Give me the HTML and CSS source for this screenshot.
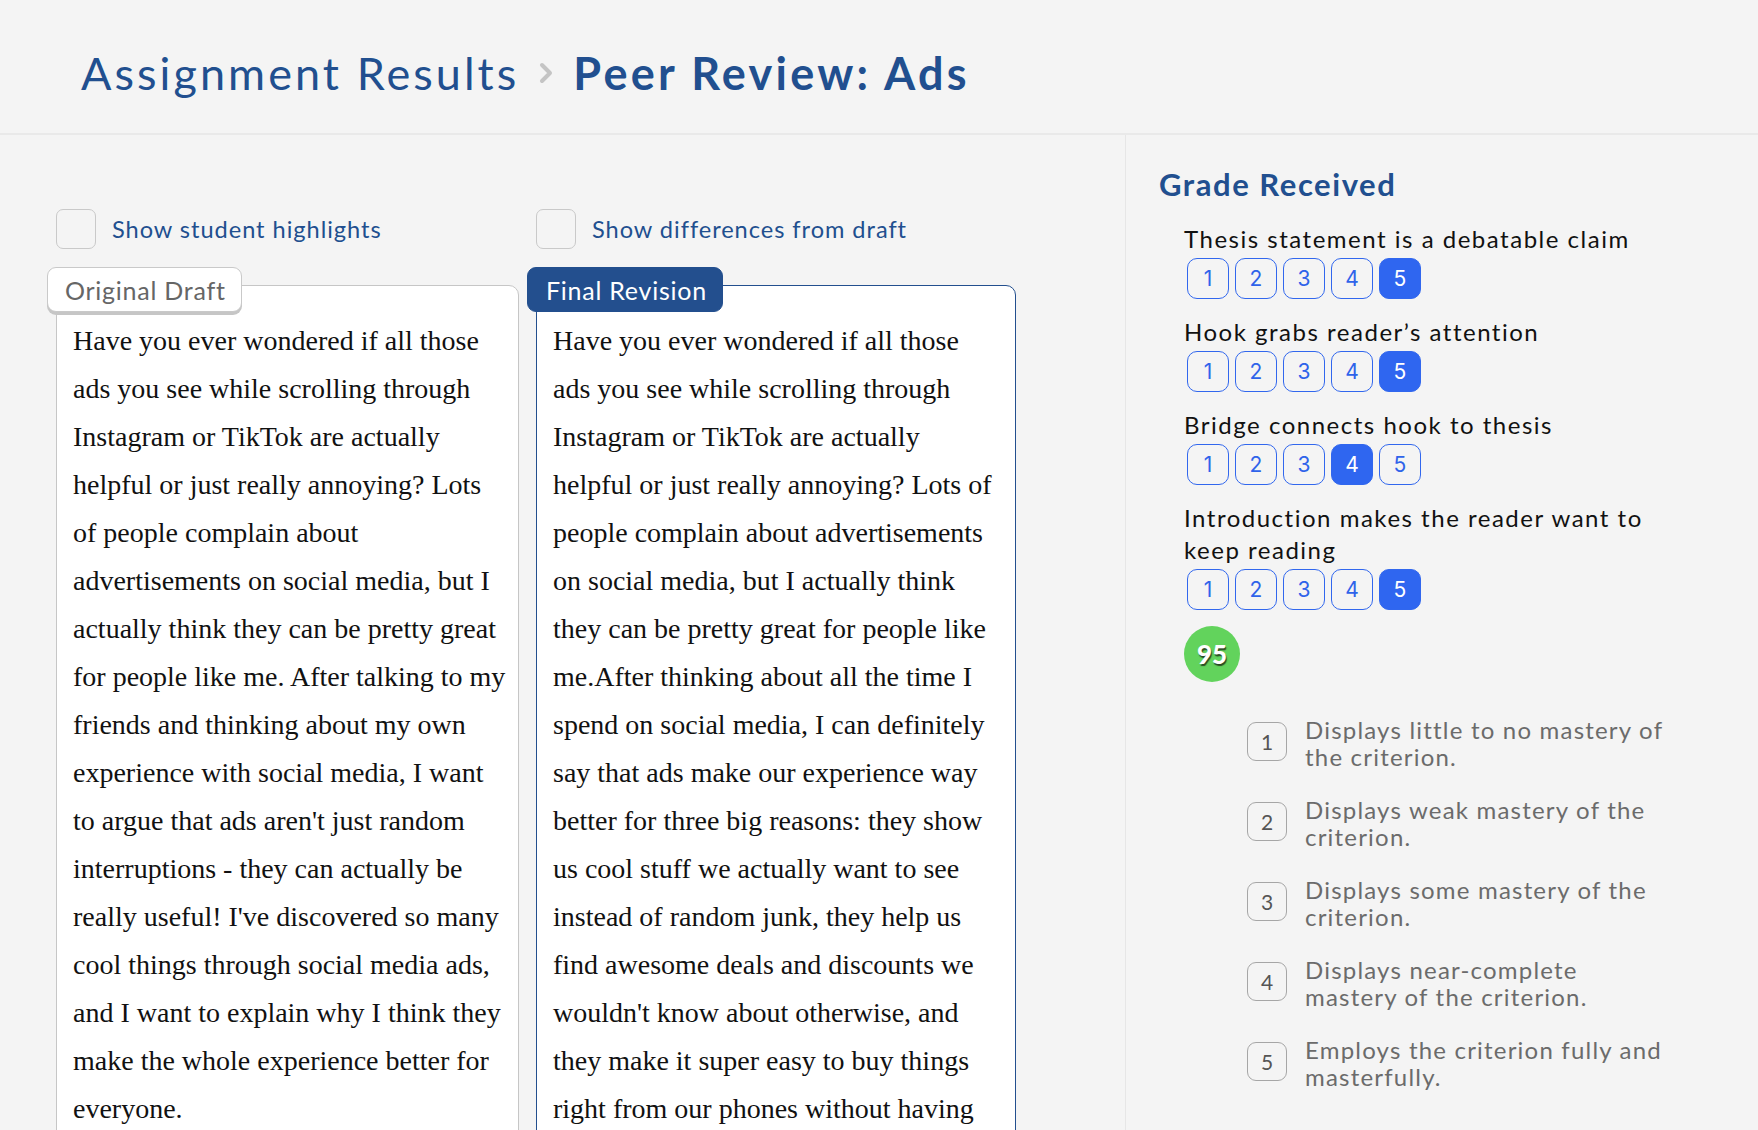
FILE: index.html
```html
<!DOCTYPE html>
<html lang="en">
<head>
  <meta charset="UTF-8" />
  <meta name="viewport" content="width=device-width, initial-scale=1.0" />
  <title>Peer Review: Ads</title>
  <link rel="stylesheet" href="styles.css">
</head>
<body>
  <!-- Breadcrumb header -->
  <div class="header">
    <h1 class="crumbs">
      <a href="#" class="crumb">Assignment Results</a>
      <svg class="chevron" width="14" height="22" viewBox="0 0 14 22"><polyline points="3,3 11,11 3,19" fill="none" stroke="#c4c4c4" stroke-width="4" stroke-linecap="round" stroke-linejoin="round"/></svg>
      <span class="crumb-current">Peer Review: Ads</span>
    </h1>
  </div>

  <div class="main">
    <div class="essays">
      <!-- Original draft -->
      <div class="essay-col draft-col">
        <label class="toggle">
          <span class="checkbox"></span>
          <span>Show student highlights</span>
        </label>
        <div class="tab tab-draft">Original Draft</div>
        <div class="paper">
          Have you ever wondered if all those<br>
          ads you see while scrolling through<br>
          Instagram or TikTok are actually<br>
          helpful or just really annoying? Lots<br>
          of people complain about<br>
          advertisements on social media, but I<br>
          actually think they can be pretty great<br>
          for people like me. After talking to my<br>
          friends and thinking about my own<br>
          experience with social media, I want<br>
          to argue that ads aren't just random<br>
          interruptions - they can actually be<br>
          really useful! I've discovered so many<br>
          cool things through social media ads,<br>
          and I want to explain why I think they<br>
          make the whole experience better for<br>
          everyone.
        </div>
      </div>

      <!-- Final revision -->
      <div class="essay-col final-col">
        <label class="toggle">
          <span class="checkbox"></span>
          <span>Show differences from draft</span>
        </label>
        <div class="tab tab-final">Final Revision</div>
        <div class="paper paper-final">
          Have you ever wondered if all those<br>
          ads you see while scrolling through<br>
          Instagram or TikTok are actually<br>
          helpful or just really annoying? Lots of<br>
          people complain about advertisements<br>
          on social media, but I actually think<br>
          they can be pretty great for people like<br>
          me.After thinking about all the time I<br>
          spend on social media, I can definitely<br>
          say that ads make our experience way<br>
          better for three big reasons: they show<br>
          us cool stuff we actually want to see<br>
          instead of random junk, they help us<br>
          find awesome deals and discounts we<br>
          wouldn't know about otherwise, and<br>
          they make it super easy to buy things<br>
          right from our phones without having<br>
          to leave the app.
        </div>
      </div>
    </div>

    <!-- Grade sidebar -->
    <div class="sidebar">
      <h2 class="grade-title">Grade Received</h2>

      <div class="criteria">
        <div class="criterion">
          <div class="criterion-name">Thesis statement is a debatable claim</div>
          <div class="scores">
            <span class="score">1</span><span class="score">2</span><span class="score">3</span><span class="score">4</span><span class="score selected">5</span>
          </div>
        </div>
        <div class="criterion">
          <div class="criterion-name">Hook grabs reader’s attention</div>
          <div class="scores">
            <span class="score">1</span><span class="score">2</span><span class="score">3</span><span class="score">4</span><span class="score selected">5</span>
          </div>
        </div>
        <div class="criterion">
          <div class="criterion-name">Bridge connects hook to thesis</div>
          <div class="scores">
            <span class="score">1</span><span class="score">2</span><span class="score">3</span><span class="score selected">4</span><span class="score">5</span>
          </div>
        </div>
        <div class="criterion">
          <div class="criterion-name">Introduction makes the reader want to keep reading</div>
          <div class="scores">
            <span class="score">1</span><span class="score">2</span><span class="score">3</span><span class="score">4</span><span class="score selected">5</span>
          </div>
        </div>

        <div class="total">95</div>
      </div>

      <!-- Scale legend -->
      <ul class="legend">
        <li><span class="legend-num">1</span><span class="legend-text">Displays little to no mastery of the criterion.</span></li>
        <li><span class="legend-num">2</span><span class="legend-text">Displays weak mastery of the criterion.</span></li>
        <li><span class="legend-num">3</span><span class="legend-text">Displays some mastery of the criterion.</span></li>
        <li><span class="legend-num">4</span><span class="legend-text">Displays near-complete mastery of the criterion.</span></li>
        <li><span class="legend-num">5</span><span class="legend-text">Employs the criterion fully and masterfully.</span></li>
      </ul>
    </div>
  </div>
</body>
</html>
```

FILE: styles.css
```css
* {
  box-sizing: border-box;
}

body {
  margin: 0;
  background-color: #f4f4f4;
  font-family: Lato, "Open Sans", sans-serif;
  letter-spacing: 0.06em;
  color: #111;
  overflow: hidden;
}

/* Header */
.header {
  height: 135px;
  padding: 12px 0 0 81px;
  display: flex;
  align-items: center;
  border-bottom: 2px solid #e9e9e9;
}
.crumbs {
  margin: 0;
  display: flex;
  align-items: center;
  font-size: 45px;
  font-weight: 400;
  letter-spacing: 0.068em;
  color: #214f8f;
}
.crumb {
  color: #214f8f;
  text-decoration: none;
}
.chevron {
  margin: 0 20px 0 20px;
}
.crumb-current {
  font-weight: 700;
  letter-spacing: 0.072em;
}

/* Layout */
.main {
  display: flex;
}
.essays {
  width: 1126px;
  flex-shrink: 0;
  padding: 74px 0 0 56px;
  border-right: 1px solid #e6e6e6;
  display: grid;
  grid-template-columns: 463px 480px;
  column-gap: 17px;
  align-items: start;
}

/* Checkbox toggles */
.toggle {
  display: flex;
  align-items: center;
  height: 40px;
  font-size: 23.6px;
  color: #214f8f;
  cursor: pointer;
}
.checkbox {
  width: 40px;
  height: 40px;
  margin-right: 16px;
  border: 1px solid #c9c9c9;
  border-radius: 7px;
  background-color: #f4f4f4;
}

/* Tabs and papers */
.tab {
  position: relative;
  z-index: 1;
  display: inline-block;
  height: 45px;
  margin: 18px 0 0 -9px;
  padding: 0 15px 0 17px;
  line-height: 44px;
  font-size: 25px;
  letter-spacing: 0.03em;
  border-radius: 9px;
}
.tab-draft {
  background-color: #fff;
  color: #666;
  border: 1px solid #c9c9c9;
  box-shadow: 0 3px 0 #c6c6c6;
}
.tab-final {
  background-color: #234f8e;
  color: #fff;
  border: 1px solid #234f8e;
  padding-left: 18px;
}
.paper {
  margin-top: -27px;
  padding: 31px 10px 20px 16px;
  background-color: #fff;
  border: 1px solid #c6c6c6;
  border-radius: 0 10px 0 0;
  font-family: "Liberation Serif", "Times New Roman", serif;
  font-size: 28px;
  line-height: 48px;
  letter-spacing: normal;
  white-space: nowrap;
  color: #111;
}
.paper-final {
  border-color: #234f8e;
}

/* Sidebar */
.sidebar {
  flex: 1;
  padding: 29px 0 0 33px;
}
.grade-title {
  margin: 0;
  font-size: 31px;
  font-weight: 700;
  letter-spacing: 0.05em;
  color: #214f8f;
  line-height: 40px;
}
.criteria {
  padding-left: 25px;
  padding-top: 19px;
  width: 505px;
}
.criterion {
  margin-bottom: 17px;
}
.criterion-name {
  font-size: 24px;
  line-height: 32px;
  letter-spacing: 0.063em;
  color: #111;
}
.scores {
  display: flex;
  gap: 6px;
  margin: 3px 0 0 3px;
}
.score {
  width: 42px;
  height: 41px;
  border: 1px solid #3167ee;
  border-radius: 10px;
  display: flex;
  align-items: center;
  justify-content: center;
  font-family: Inter, sans-serif;
  font-size: 21px;
  letter-spacing: normal;
  color: #2f63ea;
}
.score.selected {
  background-color: #2f66f0;
  color: #fff;
}
.total {
  width: 56px;
  height: 56px;
  margin-top: -1px;
  border-radius: 50%;
  background-color: #62d35c;
  color: #fff;
  font-size: 26px;
  font-weight: 900;
  letter-spacing: normal;
  display: flex;
  align-items: center;
  justify-content: center;
  text-shadow: 1px 2px 1px #2a4a22;
}

.legend {
  list-style: none;
  margin: 19px 0 0 88px;
  padding: 0;
}
.legend li {
  display: flex;
  align-items: center;
  height: 80px;
}
.legend-num {
  width: 40px;
  height: 39px;
  flex-shrink: 0;
  margin-right: 18px;
  border: 1px solid #a6a6a6;
  border-radius: 9px;
  display: flex;
  align-items: center;
  justify-content: center;
  font-size: 21px;
  letter-spacing: normal;
  color: #555;
}
.legend-text {
  max-width: 366px;
  padding-top: 4px;
  font-size: 24px;
  line-height: 27px;
  letter-spacing: 0.05em;
  color: #6b6b6b;
}
```
